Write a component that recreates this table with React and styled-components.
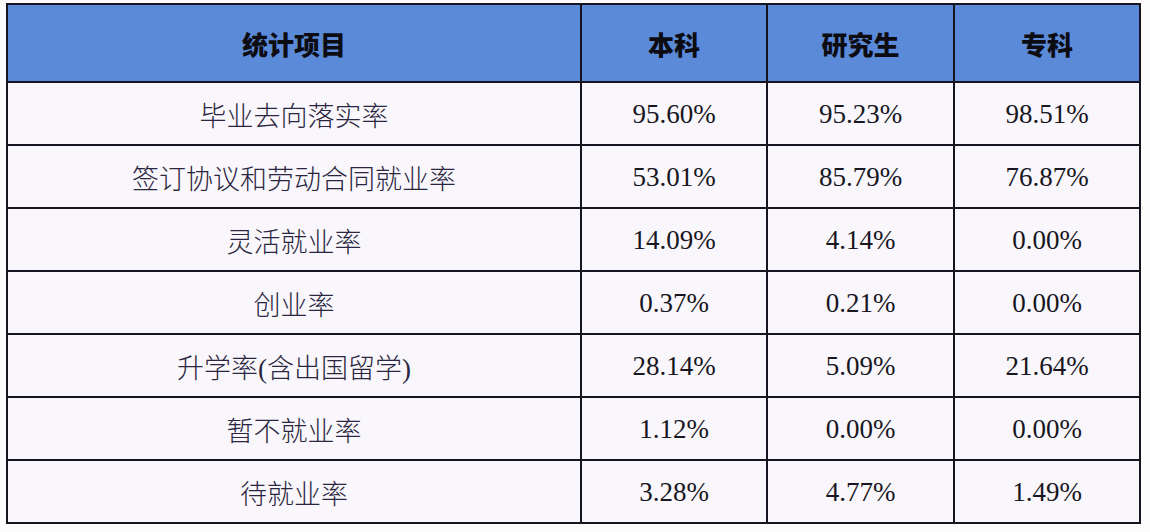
import React from "react";
import styled, { createGlobalStyle } from "styled-components";

const Global = createGlobalStyle`
  html, body { margin: 0; padding: 0; background: #fdfcfd; }
  body { width: 1150px; height: 532px; overflow: hidden; }
`;

const Table = styled.div`
  margin: 3px 0 0 6px;
  width: 1131px;
  border: 2px solid #16151f;
  background: #f9f7fb;
  display: flex;
  flex-direction: column;
`;

const Row = styled.div`
  display: grid;
  grid-template-columns: 574px 186px 187px 1fr;
  height: ${(p) => p.$h}px;
  background: ${(p) => (p.$head ? "#5b8ad8" : "#f9f7fb")};
  border-bottom: ${(p) => (p.$last ? "none" : "2px solid #16151f")};
  box-sizing: border-box;
`;

const Cell = styled.div`
  display: flex;
  align-items: center;
  justify-content: center;
  box-sizing: border-box;
  border-right: ${(p) => (p.$end ? "none" : "2px solid #16151f")};
  font-family: ${(p) =>
    p.$head
      ? '"Noto Sans CJK SC", sans-serif'
      : '"Liberation Serif", "Noto Sans CJK SC", serif'};
  font-size: ${(p) => (p.$head ? 26 : 27)}px;
  font-weight: ${(p) => (p.$head ? 900 : 300)};
  color: ${(p) => (p.$head ? "#0c0c12" : p.$num ? "#18161f" : "#2a2540")};
  white-space: nowrap;
  padding-top: ${(p) => (p.$head ? 0 : 1)}px;
`;

const head = ["统计项目", "本科", "研究生", "专科"];
const rows = [
  ["毕业去向落实率", "95.60%", "95.23%", "98.51%"],
  ["签订协议和劳动合同就业率", "53.01%", "85.79%", "76.87%"],
  ["灵活就业率", "14.09%", "4.14%", "0.00%"],
  ["创业率", "0.37%", "0.21%", "0.00%"],
  ["升学率(含出国留学)", "28.14%", "5.09%", "21.64%"],
  ["暂不就业率", "1.12%", "0.00%", "0.00%"],
  ["待就业率", "3.28%", "4.77%", "1.49%"],
];

export default function App() {
  return (
    <>
      <Global />
      <Table>
        <Row $head $h={78}>
          {head.map((h, i) => (
            <Cell key={h} $head $end={i === 3}>
              {h}
            </Cell>
          ))}
        </Row>
        {rows.map((r, ri) => (
          <Row key={r[0]} $h={ri === rows.length - 1 ? 61 : 63} $last={ri === rows.length - 1}>
            {r.map((c, i) => (
              <Cell key={i} $num={i > 0} $end={i === 3}>
                {c}
              </Cell>
            ))}
          </Row>
        ))}
      </Table>
    </>
  );
}
